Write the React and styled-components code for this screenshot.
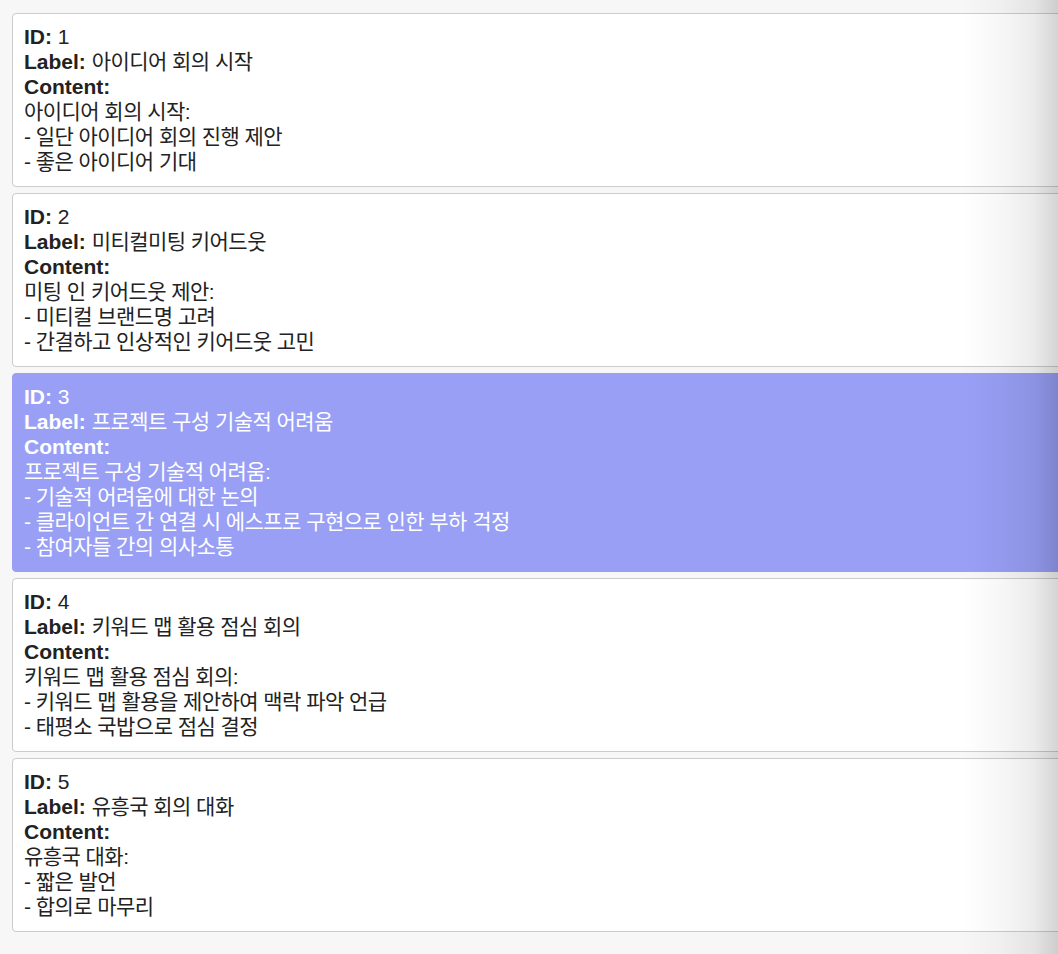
import React from "react";
import styled, { createGlobalStyle } from "styled-components";

const Global = createGlobalStyle`
  html, body {
    margin: 0;
    padding: 0;
    background: #f7f7f7;
    overflow: hidden;
  }
  body {
    font-family: "Liberation Sans", "Noto Sans CJK KR", Arial, sans-serif;
  }
`;

const Page = styled.div`
  position: relative;
  min-height: 954px;
  width: 1058px;
  overflow: hidden;
  background: #f7f7f7;
`;

const List = styled.div`
  display: flex;
  flex-direction: column;
  gap: 6px;
  padding: 13px 0 0 12px;
  width: 1120px;
`;

const Card = styled.div`
  border: 1px solid ${(p) => (p.$active ? "#989ff5" : "#cccccc")};
  border-radius: 4px;
  background: ${(p) => (p.$active ? "#989ff5" : "#ffffff")};
  color: ${(p) => (p.$active ? "#ffffff" : "#222222")};
  padding: 10px 11px 12px;
  font-size: 21px;
  line-height: 25px;
`;

const Line = styled.div`
  white-space: pre;
`;

const Text = styled.span`
  letter-spacing: -0.55px;
`;

const Key = styled.b`
  font-weight: 700;
`;

const Shade = styled.div`
  position: absolute;
  top: 0;
  right: 0;
  bottom: 0;
  width: 95px;
  pointer-events: none;
  background: linear-gradient(
    to right,
    rgba(0, 0, 0, 0) 0%,
    rgba(0, 0, 0, 0.03) 40%,
    rgba(0, 0, 0, 0.08) 75%,
    rgba(0, 0, 0, 0.17) 100%
  );
`;

const items = [
  {
    id: 1,
    label: "아이디어 회의 시작",
    content: ["아이디어 회의 시작:", "- 일단 아이디어 회의 진행 제안", "- 좋은 아이디어 기대"],
  },
  {
    id: 2,
    label: "미티컬미팅 키어드웃",
    content: ["미팅 인 키어드웃 제안:", "- 미티컬 브랜드명 고려", "- 간결하고 인상적인 키어드웃 고민"],
  },
  {
    id: 3,
    label: "프로젝트 구성 기술적 어려움",
    active: true,
    content: [
      "프로젝트 구성 기술적 어려움:",
      "- 기술적 어려움에 대한 논의",
      "- 클라이언트 간 연결 시 에스프로 구현으로 인한 부하 걱정",
      "- 참여자들 간의 의사소통",
    ],
  },
  {
    id: 4,
    label: "키워드 맵 활용 점심 회의",
    content: ["키워드 맵 활용 점심 회의:", "- 키워드 맵 활용을 제안하여 맥락 파악 언급", "- 태평소 국밥으로 점심 결정"],
  },
  {
    id: 5,
    label: "유흥국 회의 대화",
    content: ["유흥국 대화:", "- 짧은 발언", "- 합의로 마무리"],
  },
];

export default function App() {
  return (
    <>
      <Global />
      <Page>
        <List>
          {items.map((it) => (
            <Card key={it.id} $active={it.active}>
              <Line>
                <Key>ID:</Key> {it.id}
              </Line>
              <Line>
                <Key>Label:</Key> <Text>{it.label}</Text>
              </Line>
              <Line>
                <Key>Content:</Key>
              </Line>
              {it.content.map((c, i) => (
                <Line key={i}>
                  <Text>{c}</Text>
                </Line>
              ))}
            </Card>
          ))}
        </List>
        <Shade />
      </Page>
    </>
  );
}
